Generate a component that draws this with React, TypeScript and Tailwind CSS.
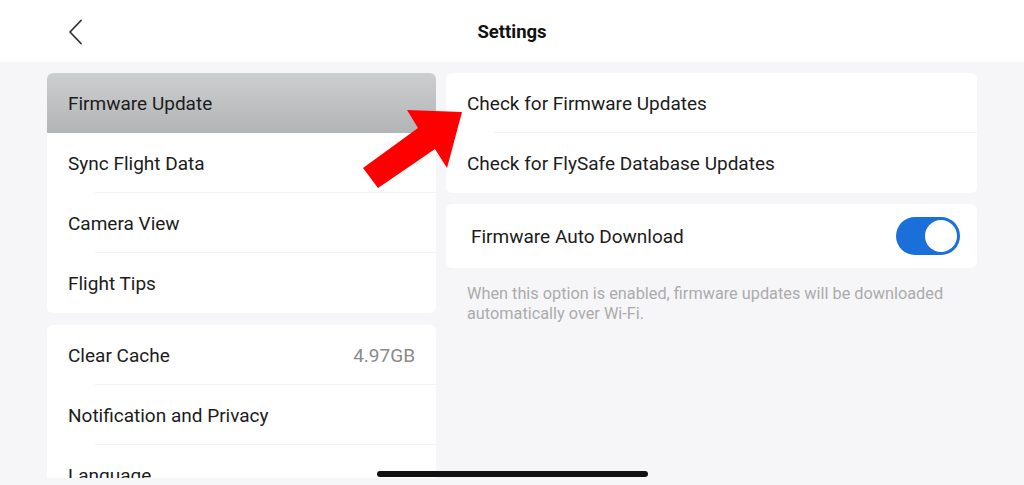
import React from 'react';

const font = { fontFamily: 'Roboto, "Noto Sans", sans-serif' };

function Row({ label, value, selected, divider }: { label: string; value?: string; selected?: boolean; divider?: boolean }) {
  return (
    <div
      className={`relative flex h-[60px] shrink-0 items-center justify-between px-[21px] pt-[2px] ${
        selected ? 'bg-gradient-to-b from-[#cdced0] to-[#b3b4b6]' : ''
      }`}
    >
      <span className="text-[19px] text-[#1c1c1c]">{label}</span>
      {value && <span className="text-[19px] text-[#8a8a8a]">{value}</span>}
      {divider && <div className="absolute bottom-0 left-[48px] right-0 h-px bg-[#f3f3f5]" />}
    </div>
  );
}

function Toggle() {
  return (
    <div className="flex h-[38px] w-[64px] items-center justify-end rounded-full bg-[#1a6fd8] p-[3px]">
      <div className="h-[32px] w-[32px] rounded-full bg-white" />
    </div>
  );
}

export default function App() {
  return (
    <div className="relative h-[485px] w-[1024px] overflow-hidden bg-[#f6f6f8]" style={font}>
      {/* header */}
      <div className="relative flex h-[62px] items-center justify-center bg-white pt-[3px]">
        <button className="absolute left-[62px] top-[14px] p-1 text-[#333]">
          <svg width="18" height="28" viewBox="0 0 18 28" fill="none">
            <path d="M15 2.5 L4 14 L15 25.5" stroke="#333" strokeWidth="1.8" strokeLinecap="round" strokeLinejoin="round" />
          </svg>
        </button>
        <h1 className="text-[18.5px] font-bold text-[#111]">Settings</h1>
      </div>

      {/* content */}
      <div className="flex h-[416px] gap-[10px] overflow-hidden px-[47px] pt-[11px]">
        <div className="flex w-[389px] flex-col gap-[12px]">
          <div className="flex shrink-0 flex-col overflow-hidden rounded-[6px] bg-white">
            <Row label="Firmware Update" selected />
            <Row label="Sync Flight Data" divider />
            <Row label="Camera View" divider />
            <Row label="Flight Tips" />
          </div>
          <div className="flex shrink-0 flex-col overflow-hidden rounded-t-[6px] bg-white">
            <Row label="Clear Cache" value="4.97GB" divider />
            <Row label="Notification and Privacy" divider />
            <Row label="Language" />
          </div>
        </div>

        <div className="flex flex-1 flex-col">
          <div className="flex shrink-0 flex-col rounded-[6px] bg-white">
            <Row label="Check for Firmware Updates" divider />
            <Row label="Check for FlySafe Database Updates" />
          </div>
          <div className="mt-[11px] flex h-[64px] shrink-0 items-center justify-between rounded-[6px] bg-white pl-[25px] pr-[17px]">
            <span className="pt-[2px] text-[19px] text-[#1c1c1c]">Firmware Auto Download</span>
            <Toggle />
          </div>
          <p className="mt-[16px] px-[21px] text-[16.3px] leading-[20px] text-[#ababab]">
            When this option is enabled, firmware updates will be downloaded automatically over Wi-Fi.
          </p>
        </div>
      </div>

      {/* red arrow overlay */}
      <svg className="pointer-events-none absolute left-0 top-0" width="1024" height="485">
        <polygon points="363,168 418,128 407,110 462,112 447,168 435,149 378,188" fill="#ff0000" />
      </svg>

      {/* home indicator */}
      <div className="absolute left-[377px] top-[471px] h-[6px] w-[271px] rounded-full bg-[#111]" />
    </div>
  );
}
